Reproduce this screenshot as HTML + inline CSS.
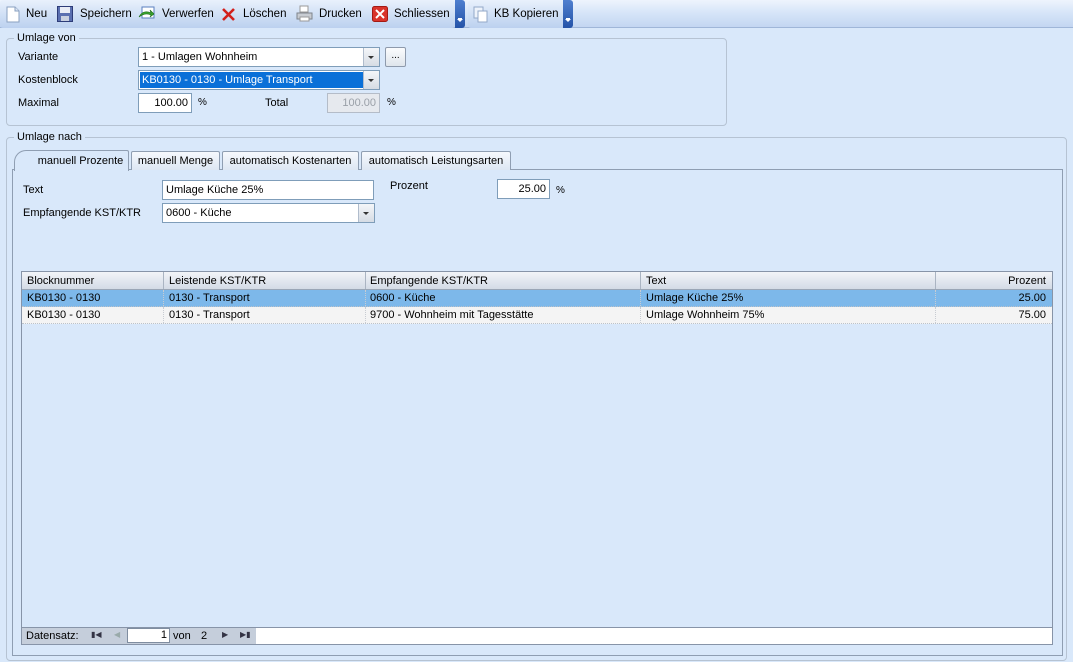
<!DOCTYPE html>
<html><head><meta charset="utf-8"><style>
*{box-sizing:border-box;margin:0;padding:0}
body{width:1073px;height:662px;background:#d9e8fa;font-family:"Liberation Sans",sans-serif;font-size:11px;color:#000;position:relative;overflow:hidden}
.a{position:absolute}
.tb{left:0;top:0;width:1073px;height:28px;background:linear-gradient(#eef4fd,#d5e4f8 50%,#c3d6f1);border-bottom:1px solid #9fb6d8}
.grp{left:0;top:0;height:28px;background:linear-gradient(#e9f1fc,#cfdff5 55%,#bcd1ef);border-radius:3px}
.ti{top:8px;font-size:11.5px}
.dd{top:0;width:10px;height:28px;background:linear-gradient(#4f7fcf,#2453a8);border-radius:0 3px 3px 0}
.dd:after{content:"";position:absolute;left:2px;top:19px;border-left:3px solid transparent;border-right:3px solid transparent;border-top:3px solid #fff;box-shadow:0 -2px 0 -1px #fff}
.gb{border:1px solid #b6c3d3;border-radius:4px}
.lg{background:#d9e8fa;padding:0 3px}
.in{background:#fff;border:1px solid #7f9db9;height:20px;padding:3px 3px;line-height:13px}
.cb:after{content:"";position:absolute;right:0;top:0;width:15px;height:18px;background:linear-gradient(#f4f6f9,#d6dce4);border-left:1px solid #b0bccc}
.ar{position:absolute;right:5px;top:8px;border-left:3px solid transparent;border-right:3px solid transparent;border-top:3px solid #333;z-index:2}
.tab{top:151px;height:19px;border:1px solid #8f9eb2;border-bottom:none;background:linear-gradient(#f6f9fd,#dde7f3);padding-top:3px;text-align:center;border-radius:2px 2px 0 0}
.hd{top:272px;height:18px;background:linear-gradient(#f2f4f8,#d3dbe6);border-bottom:1px solid #9aa6b6}
.c{position:absolute;top:3px}
.row{height:17px;border-bottom:1px dotted #bcc2ca}
.sep{position:absolute;top:0;width:1px;height:100%;border-left:1px dotted #c8ccd2}
</style></head><body>
<div class="a tb"></div>
<div class="a grp" style="width:455px"></div>
<svg class="a" style="left:6px;top:6px" width="14" height="17"><path d="M1 1h8l4 4v11H1z" fill="#fff" stroke="#8aa0c0"/><path d="M9 1v4h4" fill="#dce6f4" stroke="#8aa0c0"/></svg>
<div class="a ti" style="left:26px">Neu</div>
<svg class="a" style="left:57px;top:6px" width="16" height="16"><rect x="0.5" y="0.5" width="15" height="15" fill="#5a6fb0" stroke="#2d3c78"/><rect x="3" y="1" width="10" height="6" fill="#e8ecf6"/><rect x="4" y="10" width="8" height="5" fill="#c8d0e0"/></svg>
<div class="a ti" style="left:80px">Speichern</div>
<svg class="a" style="left:138px;top:6px" width="18" height="16"><rect x="4" y="1" width="12" height="11" fill="#fff" stroke="#5a7fbf"/><path d="M1 11c3-6 8-6 12-4l-1-3 4 4-4 3 1-2c-4-2-8-1-12 2z" fill="#3aa52e" stroke="#1f6d19" stroke-width=".6"/></svg>
<div class="a ti" style="left:162px">Verwerfen</div>
<svg class="a" style="left:221px;top:7px" width="15" height="15"><path d="M2 2l11 11M13 2L2 13" stroke="#d2201c" stroke-width="2.6"/></svg>
<div class="a ti" style="left:243px">Löschen</div>
<svg class="a" style="left:296px;top:5px" width="17" height="17"><rect x="4" y="1" width="8" height="6" fill="#fff" stroke="#999"/><path d="M1 8h15v6H1z" fill="#c8ccd2" stroke="#7e848c"/><rect x="4" y="12" width="9" height="4" fill="#fff" stroke="#999"/></svg>
<div class="a ti" style="left:319px">Drucken</div>
<svg class="a" style="left:372px;top:6px" width="16" height="16"><rect x=".5" y=".5" width="15" height="15" rx="2" fill="#d9342b" stroke="#a31a14"/><path d="M4 4l8 8M12 4l-8 8" stroke="#fff" stroke-width="2"/></svg>
<div class="a ti" style="left:394px">Schliessen</div>
<div class="a dd" style="left:455px"></div>
<div class="a grp" style="left:468px;width:97px"></div>
<svg class="a" style="left:473px;top:6px" width="16" height="17"><rect x="1" y="1" width="9" height="11" fill="#eef3fb" stroke="#93a8c8"/><rect x="5" y="5" width="9" height="11" fill="#fff" stroke="#93a8c8"/></svg>
<div class="a ti" style="left:494px">KB Kopieren</div>
<div class="a dd" style="left:563px"></div>

<div class="a gb" style="left:6px;top:38px;width:721px;height:88px"></div>
<div class="a lg" style="left:14px;top:32px">Umlage von</div>
<div class="a" style="left:18px;top:51px">Variante</div>
<div class="a in cb" style="left:138px;top:47px;width:242px">1 - Umlagen Wohnheim<span class="ar"></span></div>
<div class="a" style="left:385px;top:47px;width:21px;height:20px;border:1px solid #8e9aac;border-radius:2px;background:linear-gradient(#fbfcfe,#dfe5ec);text-align:center;line-height:16px;font-size:10px">...</div>
<div class="a" style="left:18px;top:74px">Kostenblock</div>
<div class="a in cb" style="left:138px;top:70px;width:242px;padding:1px"><div style="background:#0a70d8;color:#fff;height:16px;width:224px;padding:2px 2px">KB0130 - 0130 - Umlage Transport</div><span class="ar"></span></div>
<div class="a" style="left:18px;top:97px">Maximal</div>
<div class="a in" style="left:138px;top:93px;width:54px;text-align:right">100.00</div>
<div class="a" style="left:198px;top:97px;font-size:10px">%</div>
<div class="a" style="left:265px;top:97px">Total</div>
<div class="a in" style="left:327px;top:93px;width:53px;text-align:right;background:#e6e9ee;border-color:#b4bcc8;color:#9aa0a8">100.00</div>
<div class="a" style="left:387px;top:97px;font-size:10px">%</div>

<div class="a gb" style="left:6px;top:137px;width:1061px;height:524px"></div>
<div class="a lg" style="left:14px;top:131px">Umlage nach</div>
<div class="a" style="left:12px;top:169px;width:1051px;height:487px;border:1px solid #8f9eb2"></div>
<div class="a tab" style="left:131px;width:89px">manuell Menge</div>
<div class="a tab" style="left:222px;width:137px">automatisch Kostenarten</div>
<div class="a tab" style="left:361px;width:150px">automatisch Leistungsarten</div>
<div class="a tab" style="left:14px;top:150px;width:115px;height:21px;background:#d9e8fa;padding-left:18px;padding-top:4px;border-radius:12px 2px 0 0">manuell Prozente</div>

<div class="a" style="left:23px;top:184px">Text</div>
<div class="a in" style="left:162px;top:180px;width:212px">Umlage Küche 25%</div>
<div class="a" style="left:390px;top:180px">Prozent</div>
<div class="a in" style="left:497px;top:179px;width:53px;text-align:right">25.00</div>
<div class="a" style="left:556px;top:185px;font-size:10px">%</div>
<div class="a" style="left:23px;top:207px">Empfangende KST/KTR</div>
<div class="a in cb" style="left:162px;top:203px;width:213px">0600 - Küche<span class="ar"></span></div>

<div class="a" style="left:21px;top:271px;width:1032px;height:374px;border:1px solid #8794a8;background:#d9e8fa"></div>
<div class="a hd" style="left:22px;width:1030px">
<div class="c" style="left:5px">Blocknummer</div><div class="sep" style="left:141px;border-left:1px solid #aab4c2"></div>
<div class="c" style="left:147px">Leistende KST/KTR</div><div class="sep" style="left:343px;border-left:1px solid #aab4c2"></div>
<div class="c" style="left:348px">Empfangende KST/KTR</div><div class="sep" style="left:618px;border-left:1px solid #aab4c2"></div>
<div class="c" style="left:624px">Text</div><div class="sep" style="left:913px;border-left:1px solid #aab4c2"></div>
<div class="c" style="right:6px">Prozent</div></div>
<div class="a" style="left:22px;top:290px;width:1030px">
<div class="row a" style="left:0;top:0;width:1030px;background:#7db8ea"><div class="c" style="left:5px;top:2px">KB0130 - 0130</div><div class="sep" style="left:141px"></div><div class="c" style="left:147px;top:2px">0130 - Transport</div><div class="sep" style="left:343px"></div><div class="c" style="left:348px;top:2px">0600 - Küche</div><div class="sep" style="left:618px"></div><div class="c" style="left:624px;top:2px">Umlage Küche 25%</div><div class="sep" style="left:913px"></div><div class="c" style="right:6px;top:2px">25.00</div></div>
<div class="row a" style="left:0;top:17px;width:1030px;background:#f4f4f4"><div class="c" style="left:5px;top:2px">KB0130 - 0130</div><div class="sep" style="left:141px"></div><div class="c" style="left:147px;top:2px">0130 - Transport</div><div class="sep" style="left:343px"></div><div class="c" style="left:348px;top:2px">9700 - Wohnheim mit Tagesstätte</div><div class="sep" style="left:618px"></div><div class="c" style="left:624px;top:2px">Umlage Wohnheim 75%</div><div class="sep" style="left:913px"></div><div class="c" style="right:6px;top:2px">75.00</div></div>
</div>
<div class="a" style="left:22px;top:627px;width:1030px;height:17px;border-top:1px solid #8794a8;background:#fff"></div>
<div class="a" style="left:22px;top:628px;width:234px;height:16px;background:#c5cedb"></div>
<div class="a" style="left:26px;top:630px">Datensatz:</div>
<div class="a" style="left:91px;top:630px;font-size:8px;color:#334">▮◀</div>
<div class="a" style="left:114px;top:630px;font-size:8px;color:#9aa">◀</div>
<div class="a" style="left:127px;top:628px;width:43px;height:15px;background:#fff;border:1px solid #7f8da0;text-align:right;padding-right:2px;line-height:13px">1</div>
<div class="a" style="left:173px;top:630px">von</div>
<div class="a" style="left:201px;top:630px">2</div>
<div class="a" style="left:222px;top:630px;font-size:8px;color:#334">▶</div>
<div class="a" style="left:240px;top:630px;font-size:8px;color:#334">▶▮</div>
</body></html>
